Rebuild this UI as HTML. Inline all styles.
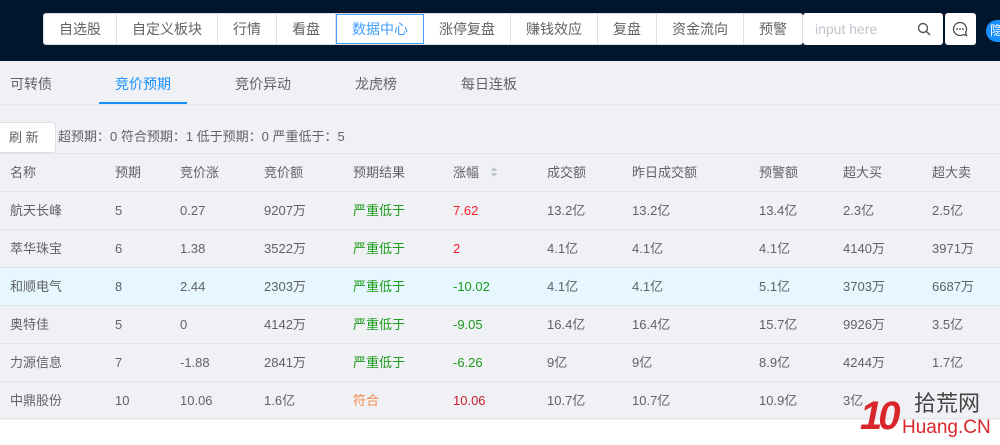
<!DOCTYPE html>
<html><head><meta charset="utf-8"><style>
*{margin:0;padding:0;box-sizing:border-box}
body{width:1000px;height:445px;overflow:hidden;background:#fff;font-family:"Liberation Sans","Noto Sans CJK SC",sans-serif;font-size:13px;color:#606266;position:relative}
.hdr{position:absolute;left:0;top:0;width:1000px;height:61px;background:#00162d}
.nav{position:absolute;left:43px;top:13px;height:32px;display:flex;background:#fff;border-radius:3px;border:1px solid #dcdfe6}
.nav div{padding:0 15px;line-height:30px;height:30px;font-size:14px;color:#606266;border-right:1px solid #dcdfe6}
.nav div:last-child{border-right:none}
.nav .act{color:#409eff;border:1px solid #409eff;line-height:28px;height:30px}
.srch{position:absolute;left:803px;top:13px;width:140px;height:32px;background:#fff;border-radius:3px;color:#c0c4cc;font-size:14px;line-height:32px;padding-left:12px}
.chat{position:absolute;left:945px;top:13px;width:31px;height:32px;background:#fff;border-radius:3px}
.blue{position:absolute;left:986px;top:20px;width:30px;height:22px;border-radius:11px;background:#1890ff;color:#fff;font-size:13px;line-height:22px;padding-left:4px}
.main{position:absolute;left:0;top:61px;width:1000px;height:359px;background:#f0f1f5}
.tabs{position:absolute;left:0;top:0;width:1000px;height:44px;border-bottom:1px solid #e4e7ed}
.tab{position:absolute;top:13px;font-size:14px;line-height:20px;color:#606266}
.ul{position:absolute;left:99px;top:41px;width:88px;height:2px;background:#1890ff}
.btn{position:absolute;left:0;top:61px;width:56px;height:31px;background:#fff;border:1px solid #dcdfe6;border-left:none;border-radius:0 4px 4px 0;line-height:29px;padding-left:9px;color:#606266}
.sum{position:absolute;left:58px;top:68px;line-height:16px;color:#606266}
.r{position:absolute;left:0;width:1000px;height:38px;border-top:1px solid #e3e5ea}
.r span{position:absolute;top:10px;height:18px;line-height:18px;white-space:nowrap}
.g{color:#1a9a1a}.red{color:#f5222d}.o{color:#f08a4b}
</style></head><body>
<div class="hdr">
<div class="nav"><div>自选股</div><div>自定义板块</div><div>行情</div><div>看盘</div><div class="act">数据中心</div><div>涨停复盘</div><div>赚钱效应</div><div>复盘</div><div>资金流向</div><div>预警</div></div>
<div class="srch">input here<svg style="position:absolute;right:12px;top:9px" width="14" height="14" viewBox="0 0 14 14"><circle cx="6" cy="6" r="4.5" fill="none" stroke="#555" stroke-width="1.4"/><path d="M9.3 9.3L13 13" stroke="#555" stroke-width="1.5"/></svg></div>
<div class="chat"><svg style="position:absolute;left:7px;top:8px" width="16" height="16" viewBox="0 0 16 16"><path d="M8 1.5a6.5 6.5 0 1 0 3.3 12.1L14.5 14.5 13.6 11.3A6.5 6.5 0 0 0 8 1.5z" fill="none" stroke="#444" stroke-width="1.2"/><circle cx="5" cy="8" r="0.9" fill="#444"/><circle cx="8" cy="8" r="0.9" fill="#444"/><circle cx="11" cy="8" r="0.9" fill="#444"/></svg></div>
<div class="blue">隐</div>
</div>
<div class="main">
<div class="tabs">
<div class="tab" style="left:10px">可转债</div>
<div class="tab" style="left:115px;color:#1890ff">竞价预期</div>
<div class="tab" style="left:235px">竞价异动</div>
<div class="tab" style="left:355px">龙虎榜</div>
<div class="tab" style="left:461px">每日连板</div>
<div class="ul"></div>
</div>
<div class="btn">刷 新</div>
<div class="sum">超预期：0 符合预期：1 低于预期：0 严重低于：5</div>
<div class="r" style="top:92px"><span style="left:10px">名称</span><span style="left:115px">预期</span><span style="left:180px">竞价涨</span><span style="left:264px">竞价额</span><span style="left:353px">预期结果</span><span style="left:453px">涨幅 <svg width="10" height="12" viewBox="0 0 10 12" style="vertical-align:-1px;margin-left:6px"><path d="M5 1L8.5 5H1.5z M5 11L8.5 7H1.5z" fill="#c0c4cc"/></svg></span><span style="left:547px">成交额</span><span style="left:632px">昨日成交额</span><span style="left:759px">预警额</span><span style="left:843px">超大买</span><span style="left:932px">超大卖</span></div>
<div class="r" style="top:130px"><span style="left:10px">航天长峰</span><span style="left:115px">5</span><span style="left:180px">0.27</span><span style="left:264px">9207万</span><span class="g" style="left:353px">严重低于</span><span class="red" style="left:453px">7.62</span><span style="left:547px">13.2亿</span><span style="left:632px">13.2亿</span><span style="left:759px">13.4亿</span><span style="left:843px">2.3亿</span><span style="left:932px">2.5亿</span></div>
<div class="r" style="top:168px"><span style="left:10px">萃华珠宝</span><span style="left:115px">6</span><span style="left:180px">1.38</span><span style="left:264px">3522万</span><span class="g" style="left:353px">严重低于</span><span class="red" style="left:453px">2</span><span style="left:547px">4.1亿</span><span style="left:632px">4.1亿</span><span style="left:759px">4.1亿</span><span style="left:843px">4140万</span><span style="left:932px">3971万</span></div>
<div class="r" style="top:206px;background:#e6f7ff"><span style="left:10px">和顺电气</span><span style="left:115px">8</span><span style="left:180px">2.44</span><span style="left:264px">2303万</span><span class="g" style="left:353px">严重低于</span><span class="g" style="left:453px">-10.02</span><span style="left:547px">4.1亿</span><span style="left:632px">4.1亿</span><span style="left:759px">5.1亿</span><span style="left:843px">3703万</span><span style="left:932px">6687万</span></div>
<div class="r" style="top:244px"><span style="left:10px">奥特佳</span><span style="left:115px">5</span><span style="left:180px">0</span><span style="left:264px">4142万</span><span class="g" style="left:353px">严重低于</span><span class="g" style="left:453px">-9.05</span><span style="left:547px">16.4亿</span><span style="left:632px">16.4亿</span><span style="left:759px">15.7亿</span><span style="left:843px">9926万</span><span style="left:932px">3.5亿</span></div>
<div class="r" style="top:282px"><span style="left:10px">力源信息</span><span style="left:115px">7</span><span style="left:180px">-1.88</span><span style="left:264px">2841万</span><span class="g" style="left:353px">严重低于</span><span class="g" style="left:453px">-6.26</span><span style="left:547px">9亿</span><span style="left:632px">9亿</span><span style="left:759px">8.9亿</span><span style="left:843px">4244万</span><span style="left:932px">1.7亿</span></div>
<div class="r" style="top:320px;border-bottom:1px solid #e3e5ea"><span style="left:10px">中鼎股份</span><span style="left:115px">10</span><span style="left:180px">10.06</span><span style="left:264px">1.6亿</span><span class="o" style="left:353px">符合</span><span style="left:453px;color:#c41d2b">10.06</span><span style="left:547px">10.7亿</span><span style="left:632px">10.7亿</span><span style="left:759px">10.9亿</span><span style="left:843px">3亿</span></div>
</div>
<div style="position:absolute;left:860px;top:393px;font:italic bold 40px 'Liberation Sans',sans-serif;line-height:46px;color:#d9262c;letter-spacing:-4px">10</div>
<div style="position:absolute;left:914px;top:391px;font-size:22px;line-height:26px;color:#444">拾荒网</div>
<div style="position:absolute;left:902px;top:417px;font-size:19px;line-height:22px;color:#d9262c">Huang.CN</div>
</body></html>
